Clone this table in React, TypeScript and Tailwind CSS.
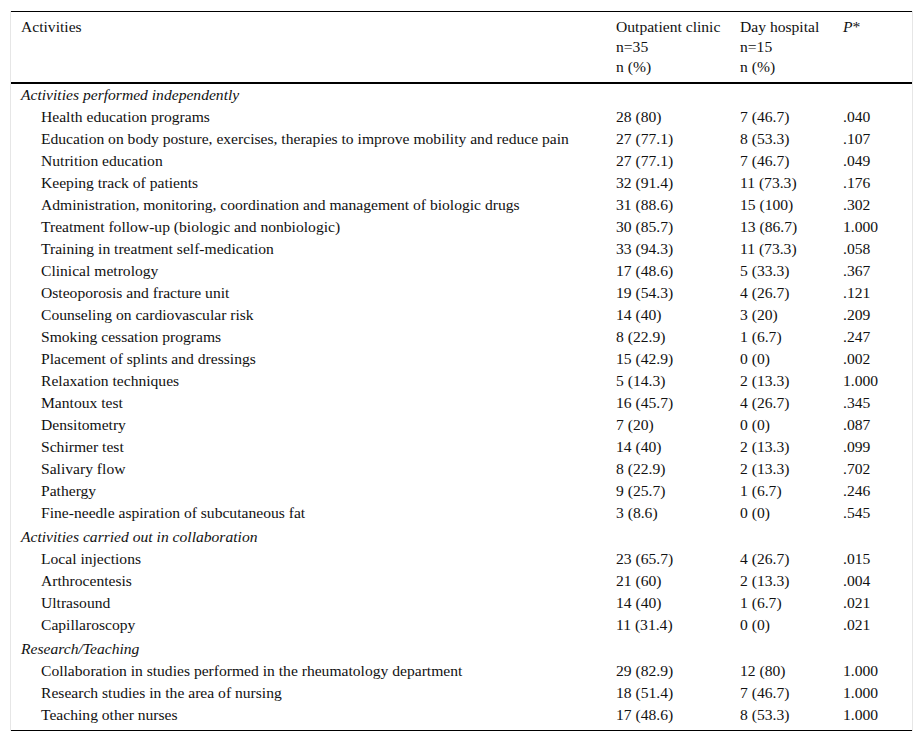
type Row = { label: string; op: string; dh: string; p: string };
type Section = { title: string; rows: Row[] };

const sections: Section[] = [
  {
    title: "Activities performed independently",
    rows: [
      { label: "Health education programs", op: "28 (80)", dh: "7 (46.7)", p: ".040" },
      { label: "Education on body posture, exercises, therapies to improve mobility and reduce pain", op: "27 (77.1)", dh: "8 (53.3)", p: ".107" },
      { label: "Nutrition education", op: "27 (77.1)", dh: "7 (46.7)", p: ".049" },
      { label: "Keeping track of patients", op: "32 (91.4)", dh: "11 (73.3)", p: ".176" },
      { label: "Administration, monitoring, coordination and management of biologic drugs", op: "31 (88.6)", dh: "15 (100)", p: ".302" },
      { label: "Treatment follow-up (biologic and nonbiologic)", op: "30 (85.7)", dh: "13 (86.7)", p: "1.000" },
      { label: "Training in treatment self-medication", op: "33 (94.3)", dh: "11 (73.3)", p: ".058" },
      { label: "Clinical metrology", op: "17 (48.6)", dh: "5 (33.3)", p: ".367" },
      { label: "Osteoporosis and fracture unit", op: "19 (54.3)", dh: "4 (26.7)", p: ".121" },
      { label: "Counseling on cardiovascular risk", op: "14 (40)", dh: "3 (20)", p: ".209" },
      { label: "Smoking cessation programs", op: "8 (22.9)", dh: "1 (6.7)", p: ".247" },
      { label: "Placement of splints and dressings", op: "15 (42.9)", dh: "0 (0)", p: ".002" },
      { label: "Relaxation techniques", op: "5 (14.3)", dh: "2 (13.3)", p: "1.000" },
      { label: "Mantoux test", op: "16 (45.7)", dh: "4 (26.7)", p: ".345" },
      { label: "Densitometry", op: "7 (20)", dh: "0 (0)", p: ".087" },
      { label: "Schirmer test", op: "14 (40)", dh: "2 (13.3)", p: ".099" },
      { label: "Salivary flow", op: "8 (22.9)", dh: "2 (13.3)", p: ".702" },
      { label: "Pathergy", op: "9 (25.7)", dh: "1 (6.7)", p: ".246" },
      { label: "Fine-needle aspiration of subcutaneous fat", op: "3 (8.6)", dh: "0 (0)", p: ".545" },
    ],
  },
  {
    title: "Activities carried out in collaboration",
    rows: [
      { label: "Local injections", op: "23 (65.7)", dh: "4 (26.7)", p: ".015" },
      { label: "Arthrocentesis", op: "21 (60)", dh: "2 (13.3)", p: ".004" },
      { label: "Ultrasound", op: "14 (40)", dh: "1 (6.7)", p: ".021" },
      { label: "Capillaroscopy", op: "11 (31.4)", dh: "0 (0)", p: ".021" },
    ],
  },
  {
    title: "Research/Teaching",
    rows: [
      { label: "Collaboration in studies performed in the rheumatology department", op: "29 (82.9)", dh: "12 (80)", p: "1.000" },
      { label: "Research studies in the area of nursing", op: "18 (51.4)", dh: "7 (46.7)", p: "1.000" },
      { label: "Teaching other nurses", op: "17 (48.6)", dh: "8 (53.3)", p: "1.000" },
    ],
  },
];

export default function App() {
  return (
    <div className="bg-white min-h-screen pt-[11px] px-[10px] font-[family-name:'Liberation_Serif',serif] text-[15.6px] leading-[20px] text-[#111]">
      <div className="border-x border-[#e6e6e6]">
        <table className="w-full table-fixed border-collapse">
          <colgroup>
            <col className="w-[595px]" />
            <col className="w-[124px]" />
            <col className="w-[103px]" />
            <col />
          </colgroup>
          <thead>
            <tr className="border-t border-black border-b-2 align-top">
              <th className="text-left font-normal pl-[10px] pt-[5px] pb-[5px]">Activities</th>
              <th className="text-left font-normal pl-[10px] pt-[5px] pb-[5px]">
                Outpatient clinic
                <br />
                n=35
                <br />
                n (%)
              </th>
              <th className="text-left font-normal pl-[10px] pt-[5px] pb-[5px]">
                Day hospital
                <br />
                n=15
                <br />
                n (%)
              </th>
              <th className="text-left font-normal pl-[10px] pt-[5px] pb-[5px]">
                <i>P</i>*
              </th>
            </tr>
          </thead>
          <tbody className="border-b border-black">
            {sections.map((s, si) => (
              <>
                <tr key={s.title} className={si === 0 ? "h-[22px]" : "h-[24px]"}>
                  <td colSpan={4} className={`pl-[10px] italic ${si === 0 ? "" : "pt-[4px]"}`}>
                    {s.title}
                  </td>
                </tr>
                {s.rows.map((r) => (
                  <tr key={r.label} className="h-[22px]">
                    <td className="pl-[30px] pt-[2px] whitespace-nowrap">{r.label}</td>
                    <td className="pl-[10px] pt-[2px]">{r.op}</td>
                    <td className="pl-[10px] pt-[2px]">{r.dh}</td>
                    <td className="pl-[10px] pt-[2px]">{r.p}</td>
                  </tr>
                ))}
              </>
            ))}
            <tr className="h-[5px]">
              <td colSpan={4} />
            </tr>
          </tbody>
        </table>
      </div>
    </div>
  );
}
